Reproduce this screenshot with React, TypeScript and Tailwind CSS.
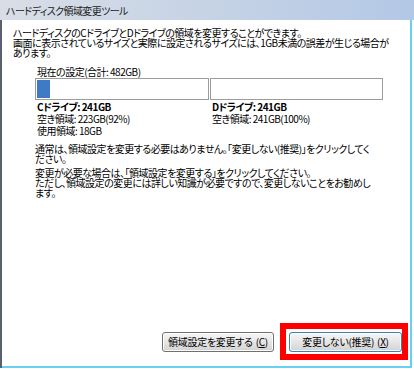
const jp = "font-['Noto_Sans_CJK_JP',sans-serif] [font-feature-settings:'palt']";

function Btn({ label, mnemonic, focused }: { label: string; mnemonic: string; focused?: boolean }) {
  return (
    <div
      className={`flex h-[20px] items-center justify-center rounded-[3px] border bg-linear-to-b from-[#f6f6f6] via-[#e6e6e6] to-[#d2d2d2] text-[10px] leading-none tracking-[-0.3px] text-black shadow-[inset_0_0_0_1px_#fcfcfc] ${
        focused ? "w-[113px] border-[#3c7fb1]" : "w-[112px] border-[#707070]"
      }`}
    >
      {label}
      <span className="ml-[3px]">
        (<span className="underline">{mnemonic}</span>)
      </span>
    </div>
  );
}

export default function App() {
  return (
    <div className={`flex h-[369px] w-[414px] flex-col overflow-hidden bg-white text-black ${jp}`}>
      {/* title bar */}
      <div className="flex h-[20px] items-center bg-linear-to-r from-[#d8dee7] via-[#c6d3e5] to-[#b3c8e6] pl-[6px] text-[10px] tracking-[-0.6px] text-[#1b1b1b]">
        ハードディスク領域変更ツール
      </div>

      <div className="flex flex-1">
        <div className="w-[2px] bg-[#58616d]" />
        <div className="flex w-[408px] flex-col pr-[2px] text-[10px] tracking-[-0.5px]">
          <div className="whitespace-nowrap pl-[11px] pt-[8px] leading-[10px]">
            <p>ハードディスクのCドライブとDドライブの領域を変更することができます。</p>
            <p>画面に表示されているサイズと実際に設定されるサイズには、1GB未満の誤差が生じる場合が</p>
            <p>あります。</p>
          </div>

          <div className="pl-[33px] pr-[25px]">
            <p className="mt-[9px] pl-[2px] leading-[10px]">現在の設定(合計: 482GB)</p>
            <div className="mt-[1px] flex h-[22px] gap-[1px]">
              <div className="flex w-[174px] border border-[#9c9c9c] bg-white p-[1px]">
                <div className="w-[13px] bg-[#3f7bc4]" />
              </div>
              <div className="flex-1 border border-[#9c9c9c] bg-white" />
            </div>
            <div className="mt-[1px] flex leading-[12px]">
              <div className="w-[177px] pl-[2px]">
                <p className="font-bold">Cドライブ: 241GB</p>
                <p>空き領域: 223GB(92%)</p>
                <p>使用領域: 18GB</p>
              </div>
              <div>
                <p className="font-bold">Dドライブ: 241GB</p>
                <p>空き領域: 241GB(100%)</p>
              </div>
            </div>

            <div className="mt-[7px] whitespace-nowrap leading-[10px]">
              <p>通常は、領域設定を変更する必要はありません。「変更しない(推奨)」をクリックしてく</p>
              <p>ださい。</p>
            </div>
            <div className="mt-[4px] whitespace-nowrap leading-[10px]">
              <p>変更が必要な場合は、「領域設定を変更する」をクリックしてください。</p>
              <p>ただし、領域設定の変更には詳しい知識が必要ですので、変更しないことをお勧めし</p>
              <p>ます。</p>
            </div>
          </div>

          <div className="mt-auto mb-[6px] flex items-center justify-end gap-[6px]">
            <Btn label="領域設定を変更する" mnemonic="C" />
            <div className="border-[6px] border-[#ff0000] pl-[3px] pt-[3px] pb-[2px]">
              <Btn label="変更しない(推奨)" mnemonic="X" focused />
            </div>
          </div>
        </div>
        <div className="w-[2px] bg-[#68d0ef]" />
        <div className="w-[2px] bg-white" />
      </div>
      <div className="flex">
        <div className="w-[2px] bg-[#58616d]" />
        <div className="h-[2px] w-[410px] bg-[#68d0ef]" />
      </div>
      <div className="h-[1px]" />
    </div>
  );
}
